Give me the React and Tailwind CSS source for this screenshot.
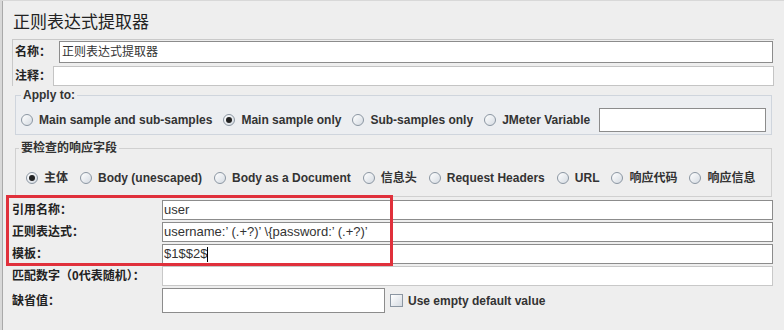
const CJK = "font-['Liberation_Sans','Noto_Sans_CJK_SC',sans-serif]"

function Radio({ label, checked }) {
  return (
    <label className="flex items-center gap-[6px] shrink-0">
      <span className="w-[12px] h-[12px] rounded-full border border-[#8b96a2] bg-gradient-to-br from-white to-[#d5dbe2] flex items-center justify-center">
        {checked && <span className="w-[6px] h-[6px] rounded-full bg-[#222]" />}
      </span>
      <span className="text-[12px] font-bold text-[#333]">{label}</span>
    </label>
  )
}

function Row({ label, children, light }) {
  return (
    <div className="flex items-center h-[20px] mb-[2px]">
      <span className="w-[150px] shrink-0 text-[12px] font-bold text-[#222]">{label}</span>
      <div
        className={
          'w-[611px] h-[20px] bg-white flex items-center px-[1px] text-[13px] text-[#333] border ' +
          (light ? 'border-[#c8c8c8]' : 'border-[#8c8c8c]')
        }
      >
        {children}
      </div>
    </div>
  )
}

export default function App() {
  return (
    <div className={`w-[784px] h-[330px] overflow-hidden bg-[#d8d8d8] pl-[2px] pt-px ${CJK}`}>
      <div className="h-full bg-[#eeeeee] border-l border-[#a9a9a9] pl-[9px]">
        {/* Title */}
        <div className="h-[38px] pt-[11px] pl-px text-[17px] text-[#222] leading-[21px]">正则表达式提取器</div>

        {/* Name / comment */}
        <div className="w-[762px] border-l border-t border-[#c9c9c9] pl-[2px]">
          <div className="flex items-center h-[23px] mb-[3px]">
            <span className="w-[44px] text-[12px] font-bold text-[#222]">名称：</span>
            <div className="w-[714px] h-[22px] bg-white border border-[#8c8c8c] flex items-center pl-[2px] text-[12px] text-[#333]">
              正则表达式提取器
            </div>
          </div>
          <div className="flex items-center h-[20px]">
            <span className="w-[38px] text-[12px] font-bold text-[#222]">注释：</span>
            <div className="w-[721px] h-[20px] bg-white border border-[#c4c4c4]" />
          </div>
        </div>

        {/* Apply to */}
        <fieldset className="ml-[3px] mt-[2px] w-[757px] h-[47px] border border-[#cfd5dd] bg-[#eceef1] px-[5px]">
          <legend className="px-[2px] text-[12px] font-bold text-[#333] leading-[14px]">Apply to:</legend>
          <div className="flex items-center h-[26px] mt-[5px] gap-[11px]">
            <Radio label="Main sample and sub-samples" />
            <Radio label="Main sample only" checked />
            <Radio label="Sub-samples only" />
            <Radio label="JMeter Variable" />
            <div className="ml-[-2px] w-[170px] h-[24px] bg-white border border-[#8c8c8c]" />
          </div>
        </fieldset>

        {/* Response field */}
        <fieldset className="ml-[3px] mt-[6px] w-[757px] h-[56px] border border-[#d0d0d0] px-[10px]">
          <legend className="ml-[-7px] px-[2px] text-[12px] font-bold text-[#333] leading-[14px]">要检查的响应字段</legend>
          <div className="flex items-center h-[24px] mt-[11px] gap-[12px]">
            <Radio label="主体" checked />
            <Radio label="Body (unescaped)" />
            <Radio label="Body as a Document" />
            <Radio label="信息头" />
            <Radio label="Request Headers" />
            <Radio label="URL" />
            <Radio label="响应代码" />
            <Radio label="响应信息" />
          </div>
        </fieldset>

        {/* Highlighted fields */}
        <div className="relative mt-[1px]">
          <div className="pt-[2px]">
            <Row label="引用名称：">user</Row>
            <Row label="正则表达式：">
              <span className="whitespace-pre">{'username:’ (.+?)’ \\{password:’ (.+?)’'}</span>
            </Row>
            <Row label="模板：">
              $1$$2$<span className="w-px h-[15px] bg-black" />
            </Row>
            <Row label="匹配数字（0代表随机）：" light />
          </div>
          <div className="absolute left-[-6px] top-[-3px] w-[387px] h-[71px] border-[3px] border-[#e0303b] pointer-events-none" />
        </div>

        {/* Default value */}
        <div className="flex items-center h-[25px]">
          <span className="w-[150px] shrink-0 text-[12px] font-bold text-[#222]">缺省值：</span>
          <div className="w-[223px] h-[25px] bg-white border border-[#8c8c8c]" />
          <span className="ml-[5px] w-[13px] h-[13px] border border-[#8b96a2] bg-gradient-to-br from-white to-[#d5dbe2]" />
          <span className="ml-[5px] text-[12px] font-bold text-[#333]">Use empty default value</span>
        </div>
      </div>
    </div>
  )
}
